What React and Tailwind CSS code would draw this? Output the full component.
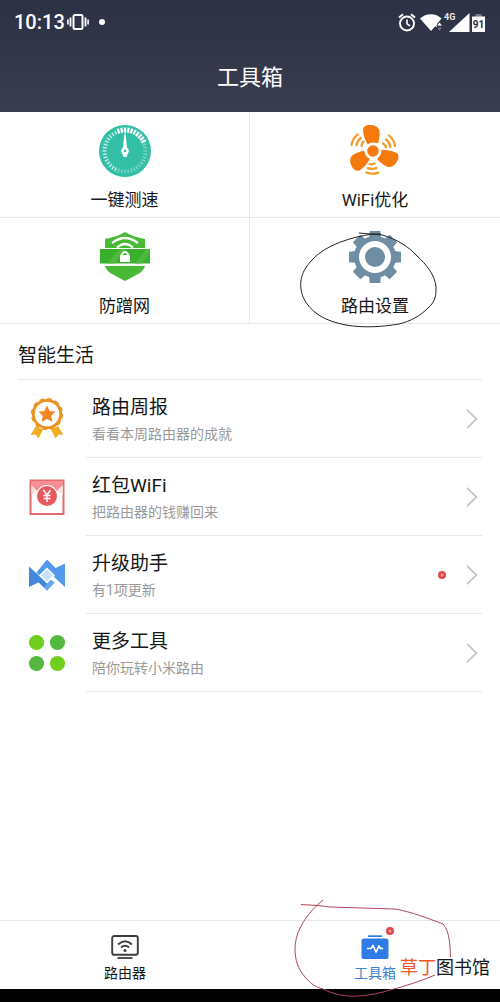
import React from 'react';

const ICON = 'block shrink-0';

function VibrateIcon() {
  return (
    <svg className={ICON} width="22" height="16" viewBox="0 0 22 16" fill="none" stroke="#fff" aria-hidden="true">
      <rect x="6.500" y="1" width="9" height="14" rx="1.500" strokeWidth="2" />
      <path d="M3.500 3.500v9M18.500 3.500v9" strokeWidth="1.800" />
      <path d="M.9 5.500v5M21.100 5.500v5" strokeWidth="1.600" />
    </svg>
  );
}

function AlarmIcon() {
  return (
    <svg className={ICON} width="18" height="19" viewBox="0 0 18 19" fill="none" stroke="#fff" aria-hidden="true">
      <circle cx="9" cy="10.500" r="7" strokeWidth="1.900" />
      <path d="M9 6.500v4.300l3 2" strokeWidth="1.600" />
      <path d="M1 4.500 5 1.300M17 4.500l-4-3.200" strokeWidth="2" />
    </svg>
  );
}

function WifiSignalIcon() {
  return (
    <svg className={ICON} width="24" height="19" viewBox="0 0 24 19" aria-hidden="true">
      <path d="M0 5.500C6-.2 16-.2 21.500 5.500L17 11v3l-2-.5L11 18Z" fill="#fff" />
      <path d="M16.500 13l3-4.200 3 4.200Z" fill="#fff" stroke="#2f3346" strokeWidth=".8" />
      <path d="M17.200 14.500h4.600L19.500 18Z" fill="#6f7486" />
    </svg>
  );
}

function CellSignalIcon() {
  return (
    <svg className={ICON} width="26" height="22" viewBox="0 0 26 22" aria-hidden="true">
      <path d="M5 21 25.500 2v19Z" fill="#fff" />
      <text x="0" y="9" fill="#e6e8f0" fontSize="9" fontWeight="700" fontFamily="Roboto, sans-serif">4G</text>
    </svg>
  );
}

function BatteryIcon() {
  return (
    <svg className={ICON} width="13" height="19" viewBox="0 0 13 19" aria-hidden="true">
      <path d="M3.500 1h6v3h-6Z" fill="#777b8a" />
      <path d="M0 3.500h13V19H0Z" fill="#fff" />
      <text x="6.500" y="14.500" textAnchor="middle" fill="#24283a" fontSize="10" fontWeight="700" fontFamily="Roboto, sans-serif">91</text>
    </svg>
  );
}

function GaugeIcon() {
  const ticks = Array.from({ length: 40 }, (_, i) => i * 9);
  return (
    <svg className={ICON} width="54" height="54" viewBox="0 0 54 54" aria-hidden="true">
      <circle cx="27" cy="27" r="26" fill="#33bfa6" />
      {ticks.map((angle) => {
        const bright = angle < 72 || angle > 340;
        const faded = angle >= 72 && angle < 200;
        return (
          <path
            key={angle}
            d={bright ? 'M27 3.500v5' : 'M27 4.500v4'}
            transform={`rotate(${angle} 27 27)`}
            stroke="#fff"
            strokeWidth={bright ? 2.200 : 1.500}
            opacity={faded ? 0.350 : bright ? 1 : 0.700}
          />
        );
      })}
      <path d="M26.600 9h.8l1.600 14.500a3.900 3.900 0 0 1 .6 6.200L28.500 33h-3l-1.100-3.300a3.900 3.900 0 0 1 .6-6.200Z" fill="#fff" />
      <circle cx="27" cy="27" r="1.300" fill="#33bfa6" />
    </svg>
  );
}

function FanIcon() {
  return (
    <svg className={ICON} width="54" height="54" viewBox="0 0 54 54" aria-hidden="true">
      {[0, 120, 240].map((a) => (
        <g key={a} transform={`translate(25 27) rotate(${a})`}>
          <path d="M-5-6C-8-11-10-16-10-21c0-4 4-5.500 8-5 4 0 7 2 8.300 5 1.200 4-.3 8.500-1 13Z" fill="#f57a0d" />
          <g fill="none" stroke="#f39a22" strokeWidth="2.200" strokeLinecap="round">
            <path d="M10-7.500q2.500 1.500 3 4" />
            <path d="M13-11.500q3.500 2.500 4.500 7.500" />
            <path d="M16-15.500q5 4 6 10.500" />
          </g>
        </g>
      ))}
      <circle cx="25" cy="27" r="8.500" fill="#fff" />
      <circle cx="25" cy="27" r="5.800" fill="#f57a0d" />
    </svg>
  );
}

function ShieldIcon() {
  return (
    <svg className={ICON} width="54" height="54" viewBox="0 0 54 54" aria-hidden="true">
      <path d="M7 9Q19 7 27 2q8 5 20 7v9H7Z" fill="#48b934" />
      <path d="M7 36h40q-1 4-6 7.500L27 51 13 43.500Q8 40 7 36Z" fill="#48b934" />
      <path d="M2 19h50v14.500H2Z" fill="#38af2d" />
      <path d="m9 33.500 13-14.500h7L16 33.500ZM37 33.500 48 19h4v4l-8 10.500Z" fill="#4cbb3b" />
      <path d="M14 13q13-10 26 0M19 17.500q8-7 16 0" fill="none" stroke="#fff" strokeWidth="2.300" />
      <path d="M22 25h10v7H22Z" fill="#fff" />
      <path d="M24 25.500V24q3-4 6 0v1.500" fill="none" stroke="#fff" strokeWidth="2" />
    </svg>
  );
}

function GearIcon() {
  return (
    <svg className={ICON} width="54" height="54" viewBox="0 0 54 54" aria-hidden="true">
      {[0, 45, 90, 135, 180, 225, 270, 315].map((a) => (
        <path key={a} d="M21 9 21.700 1h10.600l.7 8Z" transform={`rotate(${a} 27 27)`} fill="#6f8da3" />
      ))}
      <circle cx="27" cy="27" r="18.500" fill="none" stroke="#6f8da3" strokeWidth="5" />
      <circle cx="27" cy="27" r="10" fill="#6f8da3" />
    </svg>
  );
}

function MedalIcon() {
  return (
    <svg className={ICON} width="40" height="44" viewBox="0 0 40 44" aria-hidden="true">
      <path d="m9 29-5.500 9 5-.5 3 4 4.500-9ZM31 29l5.500 9-5-.5-3 4-4.500-9Z" fill="#f3ad23" />
      <circle cx="20" cy="17" r="16" fill="#fff" />
      <circle cx="20" cy="17" r="13.700" fill="none" stroke="#ed9221" strokeWidth="2.800" />
      <circle cx="20" cy="17" r="15.300" fill="none" stroke="#ed9221" strokeWidth="1.600" strokeDasharray="4.500 3.500" />
      <path d="m20 8.500 2.600 5.400 5.900.8-4.300 4.100 1.100 5.900-5.300-2.800-5.300 2.800 1.100-5.900-4.300-4.100 5.900-.8Z" fill="#f5851f" />
    </svg>
  );
}

function RedPacketIcon() {
  return (
    <svg className={ICON} width="40" height="44" viewBox="0 0 40 44" aria-hidden="true">
      <path d="M3.500 5.500h33V39h-33Z" fill="#fff" stroke="#e46a6e" strokeWidth="2" />
      <path d="M4 6h32v4l-8 8H12l-8-8Z" fill="#f58f93" />
      <path d="M4 10v10l5-4ZM36 10v10l-5-4Z" fill="#fbdadb" />
      <circle cx="20" cy="21" r="11" fill="#fff" />
      <circle cx="20" cy="21" r="10" fill="#e8595d" />
      <path d="m16.500 15 3.500 5 3.500-5M20 20v7M16.500 20.500h7M16.500 23.500h7" fill="none" stroke="#fff" strokeWidth="1.400" />
    </svg>
  );
}

function UpgradeIcon() {
  return (
    <svg className={ICON} width="40" height="44" viewBox="0 0 40 44" aria-hidden="true">
      <path d="M2 13.500 20 30l3.500-3.500 4 3L20 37.500l-8.500-8L2 34Z" fill="#4288dc" />
      <path d="M38 34 20 17.500 13.500 23.500l-4-4L20 6.500l8.500 8.500L38 10.500Z" fill="#5199ea" />
      <path d="m23.500 26.500 4 3-7.500 8-3-3Z" fill="#6aa8ee" />
      <path d="m20 15.500 7 7-7 7-7-7Z" fill="#c9e2fb" stroke="#fff" strokeWidth="1.500" />
    </svg>
  );
}

function MoreToolsIcon() {
  return (
    <svg className={ICON} width="40" height="44" viewBox="0 0 40 44" aria-hidden="true">
      <circle cx="9.500" cy="11.500" r="7.600" fill="#70ce1e" />
      <circle cx="30.500" cy="11.500" r="7.600" fill="#52b93e" />
      <circle cx="9.500" cy="32.500" r="7.600" fill="#52b93e" />
      <circle cx="30.500" cy="32.500" r="7.600" fill="#70ce1e" />
    </svg>
  );
}

function Chevron() {
  return (
    <svg className={ICON} width="12" height="20" viewBox="0 0 12 20" fill="none" stroke="#c6c6c6" strokeWidth="1.800" aria-hidden="true">
      <path d="m1 .8 9.500 9.200L1 19.200" />
    </svg>
  );
}

function RedDot() {
  return (
    <svg className={ICON} width="8" height="8" viewBox="0 0 8 8" aria-hidden="true">
      <circle cx="4" cy="4" r="4" fill="#e0484a" />
      <circle cx="4" cy="4" r="1.500" fill="#f4a3a0" />
    </svg>
  );
}

function RouterIcon() {
  return (
    <svg className={ICON} width="28" height="24" viewBox="0 0 28 24" fill="none" stroke="#3d3d3d" aria-hidden="true">
      <rect x="1.200" y="1" width="25.600" height="18.800" rx="2" strokeWidth="1.900" />
      <path d="M6.500 23h15" strokeWidth="1.800" />
      <path d="M7 9.500q7-6.500 14 0M10 12.500q4-3.500 8 0" strokeWidth="1.800" />
      <circle cx="14" cy="15.500" r="1.500" fill="#3d3d3d" stroke="none" />
    </svg>
  );
}

function ToolboxIcon() {
  return (
    <svg className={ICON} width="28" height="24" viewBox="0 0 28 24" aria-hidden="true">
      <path d="M7 .3h14V2H7Z" fill="#2f7be6" />
      <rect x=".5" y="3.500" width="27" height="20.500" rx="2.500" fill="#2f7be6" />
      <path d="M6 13.500h4l2-3 3 6.500 3-6 1.500 2.500H22" fill="none" stroke="#fff" strokeWidth="1.700" strokeLinejoin="round" />
    </svg>
  );
}

function BlackMark() {
  return (
    <svg className="pointer-events-none absolute left-[49px] top-3 z-10" width="140" height="100" viewBox="0 0 140 100" fill="none" stroke="#222" aria-hidden="true">
      <path d="M60 3 83 5C98 9 110 17 118 26c9 8 18 19 19 31 0 8 0 14-8 21-8 8-17 13-29 16-18 3-36 4-53 1C25 91 11 82 4 67-1 53 2 41 14 29 27 15 52 7 74 4l8 0" />
    </svg>
  );
}

function RedMark() {
  return (
    <svg className="pointer-events-none absolute -top-[22px] left-[43px] z-10" width="160" height="100" viewBox="0 0 160 100" fill="none" stroke="#b0445a" aria-hidden="true">
      <path d="M30 1C14 14 2 32 2 50c0 11 3 20 10 28 5 6 10 10 18 12 10 5 22 8 36 7 12-1 22-3 31-6 16-4 31-9 45-15M8 5.500l17 1 12 1.500 65 2c17 3 32 9 48 15 5 6 7 14 7.500 33" />
    </svg>
  );
}

const tools = [
  { label: '一键测速', icon: GaugeIcon },
  { label: 'WiFi优化', icon: FanIcon },
  { label: '防蹭网', icon: ShieldIcon },
  { label: '路由设置', icon: GearIcon, marked: true },
];

const services = [
  { title: '路由周报', detail: '看看本周路由器的成就', icon: MedalIcon },
  { title: '红包WiFi', detail: '把路由器的钱赚回来', icon: RedPacketIcon },
  { title: '升级助手', detail: '有1项更新', icon: UpgradeIcon, dot: true },
  { title: '更多工具', detail: '陪你玩转小米路由', icon: MoreToolsIcon },
];

export default function App() {
  return (
    <div className="flex min-h-screen flex-col bg-white font-['Roboto','Noto_Sans_CJK_SC',sans-serif] text-[#161616]">
      <header className="bg-linear-to-b from-[#2d3144] to-[#393d4e] text-white">
        <div className="flex h-11 items-center justify-between pl-[14px] pr-[15px]">
          <div className="flex items-center gap-0.5">
            <span className="text-xl font-medium">10:13</span>
            <VibrateIcon />
            <span className="ml-2 size-[6px] rounded-full bg-white" />
          </div>
          <div className="flex items-center gap-1">
            <AlarmIcon />
            <WifiSignalIcon />
            <div className="-ml-1 flex items-center gap-0.5">
              <CellSignalIcon />
              <BatteryIcon />
            </div>
          </div>
        </div>
        <h1 className="flex h-[68px] items-center justify-center text-[22px] leading-8">工具箱</h1>
      </header>

      <main className="grow">
        <div className="grid grid-cols-2">
          {tools.map(({ label, icon: Icon, marked }) => (
            <div key={label} className="relative border-b border-[#e8e8e8] odd:border-r">
              <button type="button" className="flex h-[105px] w-full flex-col items-center gap-[10px] pt-3">
                <Icon />
                <span className="text-[17px] leading-6">{label}</span>
              </button>
              {marked && <BlackMark />}
            </div>
          ))}
        </div>

        <section className="px-[18px]">
          <h2 className="border-b border-[#e8e8e8] pb-[7px] pt-4 text-[19px] leading-8">智能生活</h2>
          <ul>
            {services.map(({ title, detail, icon: Icon, dot }) => (
              <li key={title}>
                <button type="button" className="flex w-full items-stretch text-left">
                  <span className="flex w-[68px] items-center pl-[9px]">
                    <Icon />
                  </span>
                  <span className="flex h-[78px] grow items-center border-b border-[#e8e8e8] pl-[6px] pr-1">
                    <span className="flex grow flex-col pt-[3px]">
                      <span className="text-[19px] leading-7">{title}</span>
                      <span className="text-sm leading-6 text-[#999]">{detail}</span>
                    </span>
                    {dot && <RedDot />}
                    <span className="ml-5">
                      <Chevron />
                    </span>
                  </span>
                </button>
              </li>
            ))}
          </ul>
        </section>
      </main>

      <nav className="relative grid grid-cols-2 border-t border-[#e8e8e8] text-sm leading-5">
        <a href="#router" className="flex h-[68px] flex-col items-center gap-1 pt-[14px]">
          <RouterIcon />
          <span>路由器</span>
        </a>
        <div className="relative">
          <a href="#toolbox" className="flex h-[68px] flex-col items-center gap-1 pt-[14px] text-[#3f83cf]">
            <span className="relative">
              <ToolboxIcon />
              <span className="absolute -right-[5px] -top-2">
                <RedDot />
              </span>
            </span>
            <span>工具箱</span>
          </a>
          <RedMark />
        </div>
        <p className="absolute right-[10px] top-[35px] z-20 text-lg leading-6">
          <span className="text-[#f0561f]">草丁</span>图书馆
        </p>
      </nav>
      <div className="h-[13px] bg-black" />
    </div>
  );
}
